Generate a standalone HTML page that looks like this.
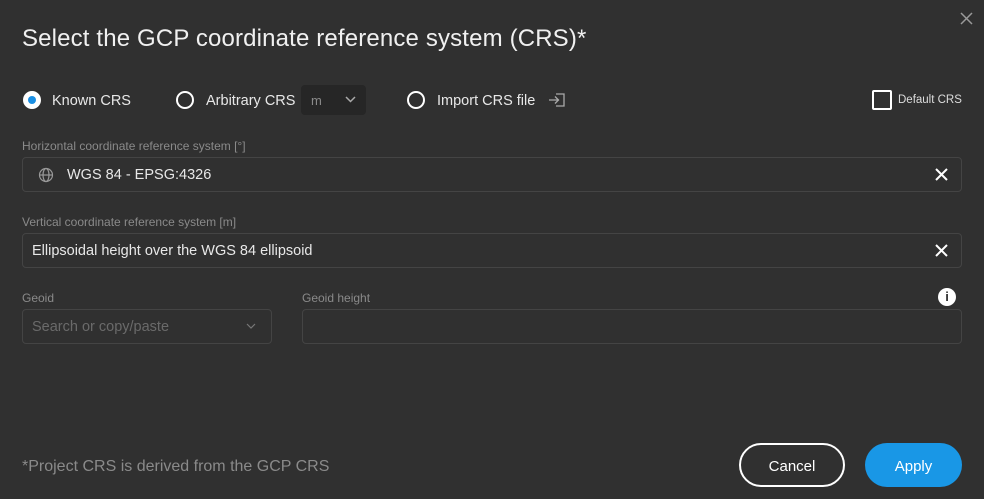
<!DOCTYPE html><html><head><style>
body{margin:0;width:984px;height:499px;background:#303030;font-family:"Liberation Sans",sans-serif;position:relative;overflow:hidden;color:#e6e6e6}
.a{position:absolute;white-space:nowrap}
.lbl{font-size:12px;color:#8a8a8a}
.box{position:absolute;border:1px solid #444;border-radius:4px;box-sizing:border-box}
.radio{position:absolute;width:18px;height:18px;border:2px solid #fff;border-radius:50%;box-sizing:border-box}
.t{font-size:14.5px;color:#e8e8e8}
</style></head><body>
<div class="a" style="left:22px;top:25px;font-size:24px;color:#f0f0f0;letter-spacing:0.15px">Select the GCP coordinate reference system (CRS)*</div>
<svg class="a" style="left:960px;top:12px" width="13" height="13"><path d="M1 1L12 12M12 1L1 12" stroke="#9a9a9a" stroke-width="1.5"/></svg>

<div class="radio" style="left:23px;top:91px;background:#fff"><div style="position:absolute;left:3px;top:3px;width:8px;height:8px;border-radius:50%;background:#1a8fe3"></div></div>
<div class="a t" style="left:52px;top:93px">Known CRS</div>
<div class="radio" style="left:176px;top:91px"></div>
<div class="a t" style="left:206px;top:93px">Arbitrary CRS</div>
<div class="a" style="left:301px;top:85px;width:65px;height:30px;background:#262626;border-radius:4px"></div>
<div class="a" style="left:311px;top:93px;font-size:13px;color:#8a8a8a">m</div>
<svg class="a" style="left:345px;top:96px" width="11" height="7"><path d="M1 1L5.5 5.5L10 1" stroke="#aaa" stroke-width="1.5" fill="none"/></svg>
<div class="radio" style="left:407px;top:91px"></div>
<div class="a t" style="left:437px;top:93px">Import CRS file</div>
<svg class="a" style="left:548px;top:92px" width="18" height="16"><path d="M8 2h8v12h-8M1 8h10M7 4.5l3.5 3.5L7 11.5" stroke="#aaa" stroke-width="1.3" fill="none"/></svg>
<div class="a" style="left:872px;top:90px;width:20px;height:20px;border:2px solid #fff;border-radius:2px;box-sizing:border-box"></div>
<div class="a" style="left:898px;top:94px;font-size:11.5px;color:#ddd">Default CRS</div>

<div class="a lbl" style="left:22px;top:139px">Horizontal coordinate reference system [°]</div>
<div class="box" style="left:22px;top:157px;width:940px;height:35px"></div>
<svg class="a" style="left:38px;top:167px" width="16" height="16"><g stroke="#999" stroke-width="1.2" fill="none"><circle cx="8" cy="8" r="6.5"/><ellipse cx="8" cy="8" rx="3" ry="6.5"/><path d="M1.5 8h13"/></g></svg>
<div class="a t" style="left:67px;top:167px">WGS 84 - EPSG:4326</div>
<svg class="a" style="left:935px;top:168px" width="13" height="13"><path d="M1 1L12 12M12 1L1 12" stroke="#fff" stroke-width="2"/></svg>

<div class="a lbl" style="left:22px;top:215px">Vertical coordinate reference system [m]</div>
<div class="box" style="left:22px;top:233px;width:940px;height:35px"></div>
<div class="a t" style="left:32px;top:243px">Ellipsoidal height over the WGS 84 ellipsoid</div>
<svg class="a" style="left:935px;top:244px" width="13" height="13"><path d="M1 1L12 12M12 1L1 12" stroke="#fff" stroke-width="2"/></svg>

<div class="a lbl" style="left:22px;top:291px">Geoid</div>
<div class="box" style="left:22px;top:309px;width:250px;height:35px"></div>
<div class="a" style="left:32px;top:319px;font-size:14.5px;color:#6a6a6a">Search or copy/paste</div>
<svg class="a" style="left:246px;top:323px" width="10" height="6"><path d="M1 1L5 5L9 1" stroke="#777" stroke-width="1.2" fill="none"/></svg>
<div class="a lbl" style="left:302px;top:291px">Geoid height</div>
<div class="box" style="left:302px;top:309px;width:660px;height:35px"></div>
<div class="a" style="left:938px;top:288px;width:18px;height:18px;border-radius:50%;background:#fff;color:#303030;font-size:13px;font-weight:bold;text-align:center;line-height:18px">i</div>

<div class="a" style="left:22px;top:458px;font-size:16px;color:#8a8a8a">*Project CRS is derived from the GCP CRS</div>
<div class="a" style="left:739px;top:443px;width:106px;height:44px;border:2px solid #fff;border-radius:22px;box-sizing:border-box;text-align:center;line-height:44px;font-size:15px;color:#fff">Cancel</div>
<div class="a" style="left:865px;top:443px;width:97px;height:44px;background:#1997e6;border-radius:22px;text-align:center;line-height:47px;font-size:15px;color:#fff">Apply</div>
</body></html>
